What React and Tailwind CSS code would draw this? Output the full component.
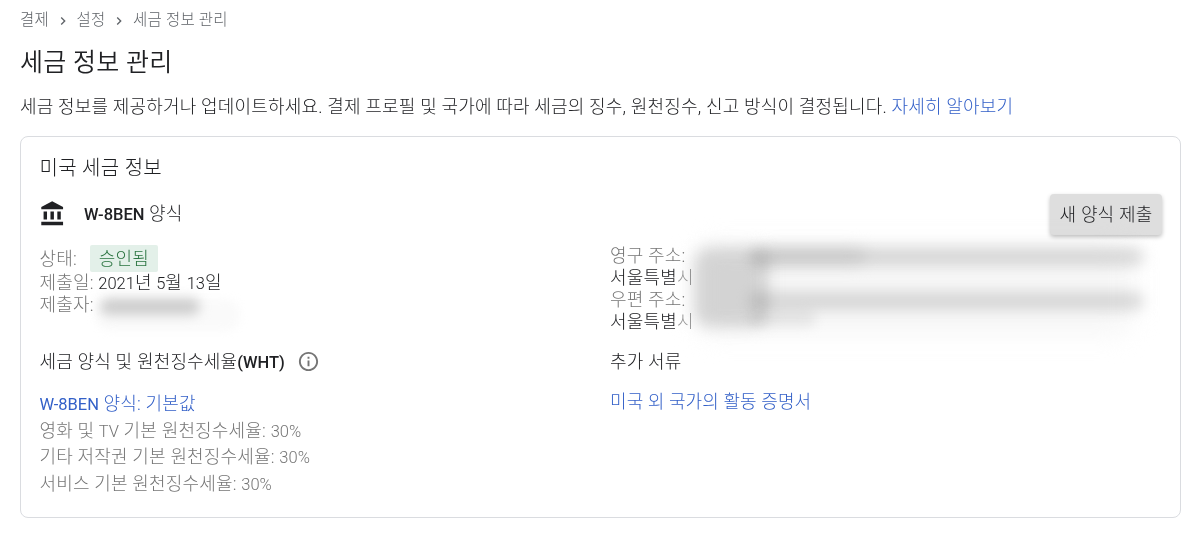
import React from 'react';
import { MdInfoOutline, MdChevronRight } from 'react-icons/md';

const crumbs = ['결제', '설정', '세금 정보 관리'];

const rates = [
  { label: <>영화 및 <En>TV</En> 기본 원천징수세율</>, value: '30%' },
  { label: '기타 저작권 기본 원천징수세율', value: '30%' },
  { label: '서비스 기본 원천징수세율', value: '30%' },
];

function En({ children }) {
  return <span className="text-[16.5px] tracking-normal font-[350]">{children}</span>;
}

function EnBold({ children }) {
  return <span className="text-[16.5px] tracking-normal font-medium">{children}</span>;
}

function BankIcon({ className }) {
  return (
    <svg viewBox="0 0 24 24" fill="currentColor" className={className}>
      <path d="M4 10v7h3v-7H4zm6 0v7h3v-7h-3zM2 22h19v-3H2v3zm14-12v7h3v-7h-3zm-4.500-9L2 6v2h19V6l-9.500-5z" />
    </svg>
  );
}

// Masked personal details
function Smudge({ className }) {
  return <span aria-hidden="true" className={`absolute mix-blend-multiply ${className}`} />;
}

const Address = ({ label }) => (
  <>
    <div className="h-[22px] leading-[22px] text-[#757575]">{label}:</div>
    <div className="h-[22px] leading-[22px]">서울특별<span className="text-[#999]">시</span></div>
  </>
);

export default function App() {
  return (
    <main className="h-[537px] overflow-hidden bg-white pl-5 pr-[13px] pt-2 font-[Roboto,'Noto_Sans_CJK_KR',sans-serif] text-[18px] font-light tracking-[0.18px] text-[#202124] whitespace-nowrap">
      <nav className="flex h-6 items-center pt-[2px] text-[15.5px] tracking-[0.2px] text-[#5f6368]">
        {crumbs.map((crumb, i) => (
          <React.Fragment key={crumb}>
            {i > 0 && <MdChevronRight className="mx-[5.800px] h-4 w-4" />}
            <span>{crumb}</span>
          </React.Fragment>
        ))}
      </nav>

      <h1 className="mt-3 h-9 pt-px text-[25px] leading-9 font-[350] tracking-[0.3px]">세금 정보 관리</h1>

      <p className="mt-3 h-7 pt-px leading-7">
        세금 정보를 제공하거나 업데이트하세요. 결제 프로필 및 국가에 따라 세금의 징수, 원천징수, 신고 방식이 결정됩니다.{' '}
        <a className="text-[#3360c8]">자세히 알아보기</a>
      </p>

      <section className="mt-4 h-[382px] rounded-lg border border-[#dadce0] pl-[18.5px] pr-[18px] pt-4">
        <h2 className="h-7 pt-px text-[20px] leading-7 tracking-[0.3px]">미국 세금 정보</h2>

        <div className="mt-[13px] flex h-[41px] items-center">
          <BankIcon className="-ml-px mb-[2px] h-[27.5px] w-[27.5px]" />
          <span className="mb-[2px] ml-[18px]"><EnBold>W-8BEN</EnBold> 양식</span>
          <button className="ml-auto h-[41px] w-[112px] rounded-[4px] bg-[#dedede] text-center shadow-[0_2px_4px_rgba(0,0,0,0.25)]">
            새 양식 제출
          </button>
        </div>

        <div className="mt-[10px] grid h-[88px] grid-cols-[570.5px_1fr]">
          <div className="relative">
            <div className="flex h-[27px] items-center text-[#757575]">
              <span>상태:</span>
              <span className="ml-[13px] h-[27px] w-[68px] rounded-[2px] bg-[#e3f0e9] text-center leading-[27px] text-[#2a7440]">승인됨</span>
            </div>
            <div className="h-[22px] leading-[22px]">
              <span className="text-[#757575]">제출일:</span> <En>2021</En>년 <En>5</En>월 <En>13</En>일
            </div>
            <div className="h-[22px] leading-[22px] text-[#757575]">제출자:</div>
            <Smudge className="left-[60px] top-[53px] h-[17px] w-[100px] rounded-full bg-[#d2d2d2] blur-[6px]" />
            <Smudge className="left-[56px] top-[54px] h-[32px] w-[144px] rounded-[14px] bg-[#fafafa] blur-[4px]" />
          </div>
          <div className="relative">
            <Address label="영구 주소" />
            <Address label="우편 주소" />
            <Smudge className="left-[84px] top-[0px] h-[90px] w-[440px] rounded-[20px] bg-[#f7f7f7] blur-[12px]" />
            <Smudge className="left-[84px] top-[2px] h-[80px] w-[74px] rounded-[16px] bg-[#dadada] blur-[8px]" />
            <Smudge className="left-[146px] top-[2px] h-[18px] w-[110px] rounded-full bg-[#ececec] blur-[8px]" />
            <Smudge className="left-[140px] top-[2px] h-[19px] w-[394px] rounded-full bg-[#dedede] blur-[7px]" />
            <Smudge className="left-[140px] top-[47px] h-[18px] w-[394px] rounded-full bg-[#dedede] blur-[7px]" />
            <Smudge className="left-[140px] top-[66px] h-[16px] w-[66px] rounded-full bg-[#eee] blur-[6px]" />
          </div>
        </div>

        <div className="mt-[14px] grid grid-cols-[570.5px_1fr]">
          <div>
            <h3 className="flex h-7 items-center">
              <span className="pt-px">세금 양식 및 원천징수세율<EnBold>(WHT)</EnBold></span>
              <MdInfoOutline className="ml-3 h-[23px] w-[23px] text-[#757575]" />
            </h3>
            <a className="mt-4 block h-[26.5px] leading-[26px] text-[#3360c8]"><span className="text-[16.5px] font-normal tracking-normal">W-8BEN</span> 양식: 기본값</a>
            {rates.map((rate, i) => (
              <div key={i} className="h-[26.5px] leading-[26px] text-[#757575]">
                {rate.label}: <En>{rate.value}</En>
              </div>
            ))}
          </div>
          <div>
            <h3 className="h-7 pt-px leading-7">추가 서류</h3>
            <a className="mt-[13px] block h-7 leading-7 tracking-[0.1px] text-[#3360c8]">미국 외 국가의 활동 증명서</a>
          </div>
        </div>
      </section>
    </main>
  );
}
